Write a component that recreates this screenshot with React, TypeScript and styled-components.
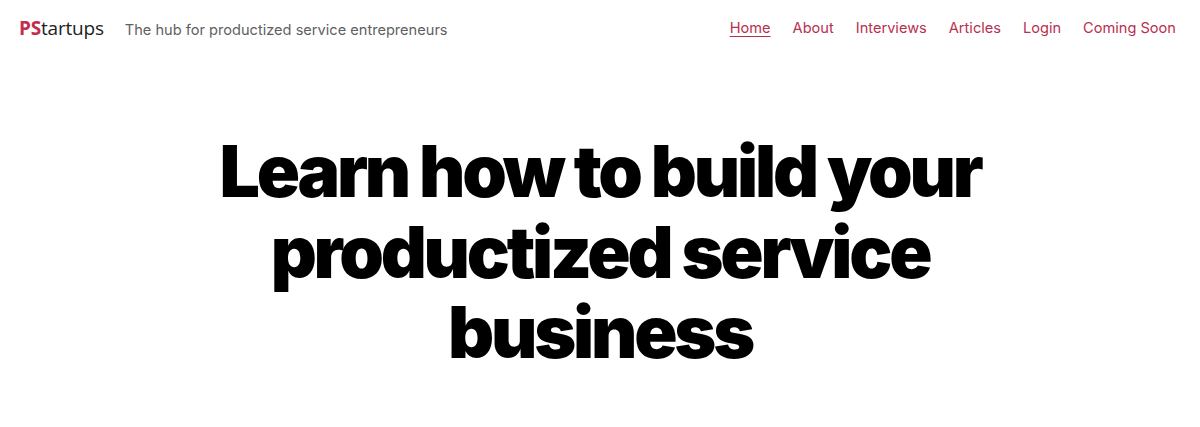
import React from "react";
import styled, { createGlobalStyle } from "styled-components";

const Global = createGlobalStyle`
  html, body { margin: 0; padding: 0; background: #fff; }
  body { font-family: Inter, "Noto Sans", sans-serif; }
`;

const Header = styled.header`
  display: flex;
  align-items: center;
  justify-content: space-between;
  height: 56px;
  padding: 0 24px 0 19px;
`;

const Brand = styled.div`
  display: flex;
  align-items: baseline;
  gap: 21px;
`;

const Logo = styled.a`
  font-family: "Open Sans", "Noto Sans", sans-serif;
  font-size: 19px;
  color: #222;
  text-decoration: none;
  letter-spacing: -0.2px;
`;

const LogoAccent = styled.span`
  color: #c22e4d;
  font-weight: 700;
`;

const Tagline = styled.span`
  font-size: 14.6px;
  color: #5f5f5f;
`;

const Nav = styled.nav`
  display: flex;
  gap: 22px;
`;

const NavLink = styled.a<{ $active?: boolean }>`
  font-size: 14.6px;
  color: #b8304f;
  text-decoration: ${(p) => (p.$active ? "underline" : "none")};
  text-underline-offset: 3px;
`;

const Hero = styled.section`
  display: flex;
  justify-content: center;
  padding-top: 75px;
`;

const Title = styled.h1`
  margin: 0;
  width: 820px;
  text-align: center;
  font-family: Inter, sans-serif;
  font-weight: 900;
  font-size: 71.5px;
  line-height: 80.5px;
  letter-spacing: -3.2px;
  color: #000;
`;

export default function App() {
  return (
    <>
      <Global />
      <Header>
        <Brand>
          <Logo href="#">
            <LogoAccent>PS</LogoAccent>tartups
          </Logo>
          <Tagline>The hub for productized service entrepreneurs</Tagline>
        </Brand>
        <Nav>
          <NavLink href="#" $active>Home</NavLink>
          <NavLink href="#">About</NavLink>
          <NavLink href="#">Interviews</NavLink>
          <NavLink href="#">Articles</NavLink>
          <NavLink href="#">Login</NavLink>
          <NavLink href="#">Coming Soon</NavLink>
        </Nav>
      </Header>
      <Hero>
        <Title>Learn how to build your productized service business</Title>
      </Hero>
    </>
  );
}
